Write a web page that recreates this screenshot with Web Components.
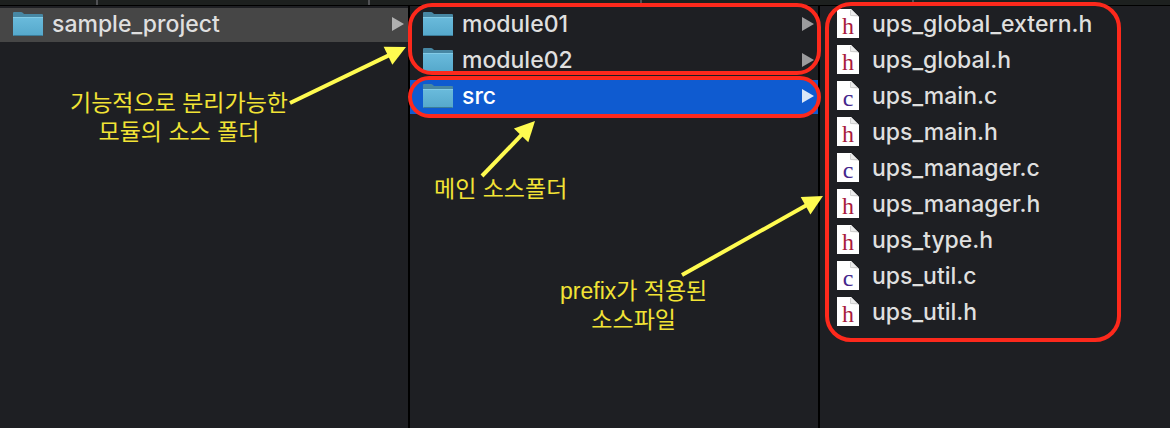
<!DOCTYPE html>
<html lang="ko">
<head>
<meta charset="utf-8">
<title>sample_project</title>
<style>
html, body {
    margin: 0;
    background: #1e1f23;
}
body {
    font-family: Inter, "Noto Sans CJK KR", sans-serif;
}
</style>
</head>
<body>
<file-browser>
    <tab-strip slot="tabs"></tab-strip>
    <file-column>
        <file-group>
            <file-row kind="folder" state="open">sample_project</file-row>
        </file-group>
        <call-out slot="notes" arrow="290,97 406,41" style="left: 70px; top: 83px">기능적으로 분리가능한<br>모듈의 소스 폴더</call-out>
    </file-column>
    <file-column>
        <file-group ring style="--ring: -5px -3px 3px -2px; --radius: 24px">
            <file-row kind="folder">module01</file-row>
            <file-row kind="folder">module02</file-row>
        </file-group>
        <file-group ring style="--ring: -4px -3px -4px -2px; --radius: 24px">
            <file-row kind="folder" state="selected">src</file-row>
        </file-group>
        <call-out slot="notes" arrow="72,170 125,115" style="left: 24px; top: 169px">메인 소스폴더</call-out>
        <call-out slot="notes" arrow="272,269 413,190" style="left: 150px; top: 271px">prefix가 적용된<br>소스파일</call-out>
    </file-column>
    <file-column last>
        <file-group ring fit style="--ring: -6px 0 -12px 5px; --radius: 26px">
            <file-row kind="h">ups_global_extern.h</file-row>
            <file-row kind="h">ups_global.h</file-row>
            <file-row kind="c">ups_main.c</file-row>
            <file-row kind="h">ups_main.h</file-row>
            <file-row kind="c">ups_manager.c</file-row>
            <file-row kind="h">ups_manager.h</file-row>
            <file-row kind="h">ups_type.h</file-row>
            <file-row kind="c">ups_util.c</file-row>
            <file-row kind="h">ups_util.h</file-row>
        </file-group>
    </file-column>
</file-browser>

<script>
class FileBrowser extends HTMLElement {
    constructor() {
        super();
        this.attachShadow({mode: "open"}).innerHTML = `
        <style>
        :host {
            display: flex;
            flex-direction: column;
            min-height: 100vh;
            overflow: hidden;
        }
        main {
            flex: 1;
            display: grid;
            grid-template-columns: 41fr 41fr 35fr;
        }
        </style>
        <slot name="tabs"></slot>
        <main><slot></slot></main>`;
    }
}

class TabStrip extends HTMLElement {
    constructor() {
        super();
        this.attachShadow({mode: "open"}).innerHTML = `
        <style>
        :host {
            display: grid;
            grid-template-columns: 98fr 272fr 272fr 272fr 256fr;
            height: 5px;
            background: #1d201f;
            border-bottom: 1px solid #000;
        }
        i {
            border-right: 2px solid #505154;
        }
        i:first-child {
            background: #323336;
        }
        i:last-child {
            border: 0;
        }
        </style>
        <i></i><i></i><i></i><i></i><i></i>`;
    }
}

class FileColumn extends HTMLElement {
    constructor() {
        super();
        this.attachShadow({mode: "open"}).innerHTML = `
        <style>
        :host {
            display: block;
            position: relative;
            min-width: 0;
            border-right: 2px solid #000;
        }
        :host([last]) {
            border-right: 0;
        }
        .list {
            display: flex;
            flex-direction: column;
            gap: 2px;
            padding-top: 2px;
        }
        </style>
        <div class="list"><slot></slot></div>
        <slot name="notes"></slot>`;
    }
}

// a run of rows, optionally circled in red
class FileGroup extends HTMLElement {
    constructor() {
        super();
        this.attachShadow({mode: "open"}).innerHTML = `
        <style>
        :host {
            display: flex;
            flex-direction: column;
            gap: 2px;
            position: relative;
        }
        :host([fit]) {
            width: max-content;
            padding-right: 25px;
        }
        :host([ring])::after {
            content: "";
            position: absolute;
            inset: var(--ring);
            border: 4px solid #fd291c;
            border-radius: var(--radius);
            box-sizing: border-box;
            z-index: 1;
            pointer-events: none;
        }
        </style>
        <slot></slot>`;
    }
}

const folderIcon = `
    <svg width="32" height="26" viewBox="0 0 32 26">
        <defs>
            <linearGradient id="front" x1="0" y1="0" x2="0" y2="1">
                <stop offset="0" stop-color="#6abbdc"/>
                <stop offset="1" stop-color="#55a8cb"/>
            </linearGradient>
        </defs>
        <path d="M1 24V2Q1 1 2 1H9Q10 1 11 2L12 3H30Q31 3 31 4V24Z" fill="#4787a3"/>
        <path d="M1 6H31V24Q31 25 30 25H2Q1 25 1 24Z" fill="url(#front)"/>
        <path d="M1 6.5H31" stroke="#82cbe6"/>
        <path d="M1.500 24.500H30.500" stroke="#3b7c99"/>
    </svg>`;

const pageIcon = (letter) => `
    <svg width="22" height="30" viewBox="0 0 22 30">
        <path d="M0 0H14L22 8V29H0Z" fill="#fff"/>
        <path d="M14 0L13.500 7L22 8Z" fill="#ececec"/>
        <path d="M13.500 1V6.500H20" fill="none" stroke="#d0d0d0"/>
        <text x="11" y="25" text-anchor="middle" font-family="Liberation Serif, serif" font-size="24"
            fill="${letter === "h" ? "#a8193b" : "#44268c"}">${letter}</text>
    </svg>`;

class FileRow extends HTMLElement {
    constructor() {
        super();
        this.attachShadow({mode: "open"});
    }

    connectedCallback() {
        const kind = this.getAttribute("kind");
        const folder = kind === "folder";
        this.shadowRoot.innerHTML = `
        <style>
        :host {
            display: block;
            color: #dfdfdf;
            --arrow: #9b9b9d;
        }
        :host([state="open"]) {
            background: #464646;
            --arrow: #b0b0b0;
        }
        :host([state="selected"]) {
            background: #0f5bd0;
            color: #fff;
            --arrow: #dbe7f8;
        }
        button {
            display: flex;
            align-items: center;
            width: 100%;
            height: 34px;
            padding: 0 4px 2px 12px;
            border: 0;
            background: none;
            color: inherit;
            font: 500 23px/34px Inter, sans-serif;
            text-align: left;
        }
        button.file {
            padding-left: 17px;
        }
        svg {
            flex: none;
            display: block;
        }
        .name {
            flex: 1;
            height: 34px;
            padding-left: 8px;
            white-space: nowrap;
        }
        .file .name {
            padding-left: 13px;
        }
        </style>
        <button class="${folder ? "folder" : "file"}" type="button">
            ${folder ? folderIcon : pageIcon(kind)}
            <span class="name"><slot></slot></span>
            ${folder ? `<svg width="12" height="14" viewBox="0 0 12 14"><path d="M0 0L12 7L0 14Z" fill="var(--arrow)"/></svg>` : ""}
        </button>`;
    }
}

// yellow note with an arrow; arrow="x1,y1 x2,y2" in column coordinates
class CallOut extends HTMLElement {
    constructor() {
        super();
        this.attachShadow({mode: "open"});
    }

    connectedCallback() {
        const [x1, y1, x2, y2] = this.getAttribute("arrow").split(/[ ,]/).map(Number);
        const angle = Math.atan2(y2 - y1, x2 - x1) * 180 / Math.PI;
        const length = Math.hypot(x2 - x1, y2 - y1);
        const left = parseInt(this.style.left);
        const top = parseInt(this.style.top);
        this.shadowRoot.innerHTML = `
        <style>
        :host {
            position: absolute;
            z-index: 2;
            color: #f2e335;
            font: 23px/29px "Liberation Sans", "Noto Sans CJK KR", sans-serif;
            text-align: center;
            white-space: nowrap;
        }
        svg {
            position: absolute;
            left: 0;
            top: 0;
            overflow: visible;
            pointer-events: none;
        }
        </style>
        <svg width="1" height="1">
            <g transform="translate(${x1 - left} ${y1 - top}) rotate(${angle})" fill="#fffb50">
                <path d="M0 -2H${length - 18}V2H0Z"/>
                <path d="M${length} 0L${length - 20} -10V10Z"/>
            </g>
        </svg>
        <slot></slot>`;
    }
}

customElements.define("file-browser", FileBrowser);
customElements.define("tab-strip", TabStrip);
customElements.define("file-column", FileColumn);
customElements.define("file-group", FileGroup);
customElements.define("file-row", FileRow);
customElements.define("call-out", CallOut);
</script>
</body>
</html>
